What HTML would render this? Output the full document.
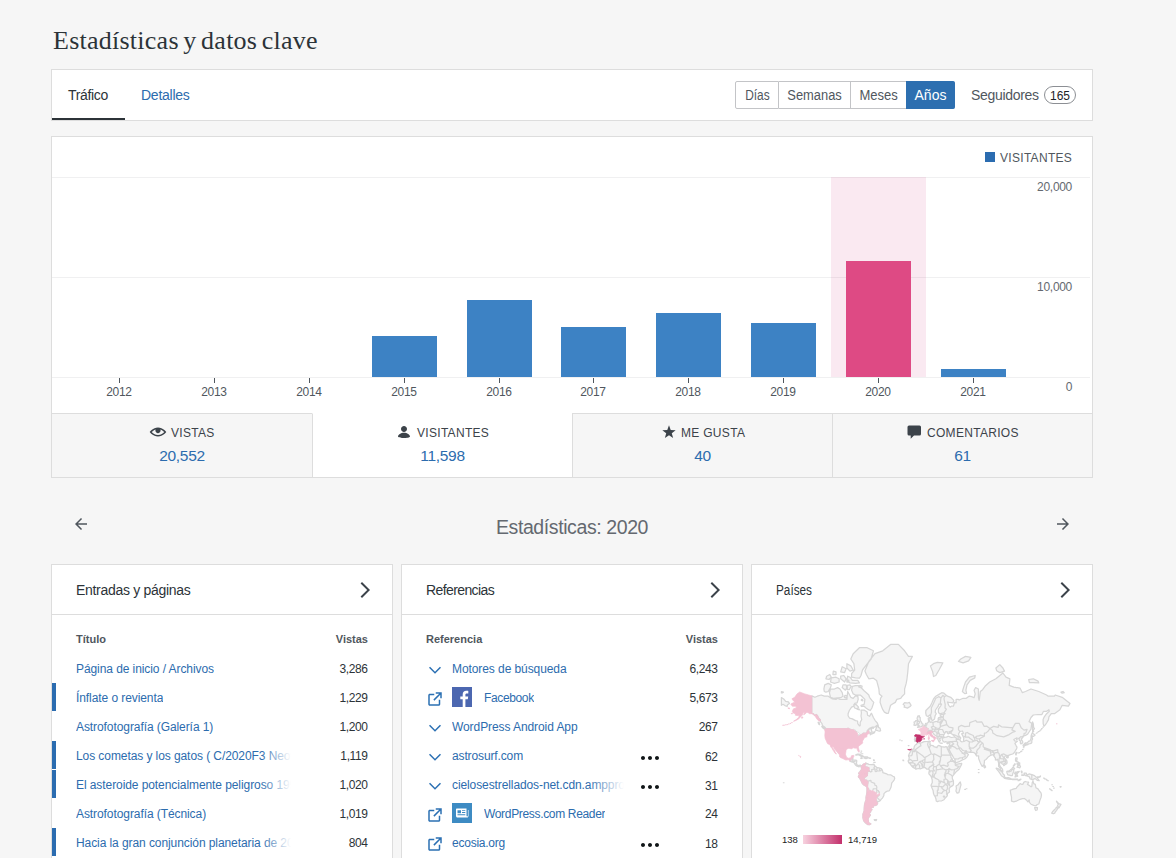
<!DOCTYPE html>
<html lang="es">
<head>
<meta charset="utf-8">
<title>Estadísticas y datos clave</title>
<style>
*{box-sizing:border-box;margin:0;padding:0}
html,body{width:1176px;height:858px;overflow:hidden;background:#f6f6f6}
body{font-family:"Liberation Sans",sans-serif;color:#2c3338;position:relative;font-size:14px}
.abs{position:absolute}
.card{position:absolute;background:#fff;border:1px solid #dddddd}
h1{position:absolute;left:53px;top:24px;letter-spacing:.25px;word-spacing:-2.200px;font-family:"Liberation Serif",serif;font-weight:400;font-size:26px;line-height:34px;color:#2c3338;white-space:nowrap}
/* nav */
.tab{position:absolute;top:0;height:50px;line-height:50px;font-size:14px;white-space:nowrap}
.tab.sel{color:#2c3338}
.tab.lnk{color:#2c6cae}
.seg{position:absolute;top:11px;height:28px;line-height:26px;border:1px solid #c3c4c7;border-left:none;background:#fff;color:#50575e;font-size:14px;text-align:center;white-space:nowrap}
.seg.first{border-left:1px solid #c3c4c7;border-radius:2px 0 0 2px}
.seg span{display:inline-block}
.seg.on{background:#2d6fb0;border-color:#2d6fb0;color:#fff;border-radius:0 2px 2px 0}
.badge{position:absolute;border:1px solid #8c8f94;border-radius:9px;font-size:12px;line-height:15px;text-align:center;color:#2c3338;background:#fff}
/* chart */
.grid{position:absolute;left:0;width:1038px;height:1px;background:#f0f0f1}
.bar{position:absolute;width:65px;background:#3d82c4}
.yl{position:absolute;font-size:12px;line-height:14px;color:#646970;text-align:right;width:60px;letter-spacing:-.3px}
.xl{position:absolute;font-size:12px;line-height:14px;color:#50575e;text-align:center;width:60px;top:248px;letter-spacing:-.3px}
.tick{position:absolute;width:1px;height:4.500px;top:241px;background:#50575e}
/* stat tabs */
.st{position:absolute;top:413px;height:65px;width:261px;border:1px solid #dddddd;background:#f6f6f6;text-align:center}
.st.on{background:#fff;border-top-color:#fff}
.st .lb{position:absolute;top:11px;font-size:12px;line-height:16px;letter-spacing:.3px;color:#3c434a;white-space:nowrap}
.st .ic{position:absolute}
.st .vl{position:absolute;left:0;right:0;top:32px;font-size:15.5px;line-height:20px;color:#2c6cae;letter-spacing:-.3px}
/* modules */
.mh{position:absolute;left:0;right:0;top:0;height:50px;border-bottom:1px solid #dddddd;line-height:51px;padding-left:24px;font-size:14px;color:#2c3338}
.mh svg{position:absolute;left:300px;top:13px}
.colh{position:absolute;top:66px;font-size:11px;line-height:16px;font-weight:700;color:#50575e}
.row{position:absolute;left:0;right:0;height:29px;line-height:31px;font-size:12px;color:#2c6cae;white-space:nowrap}
.row .t{position:absolute;left:24px;top:0;overflow:hidden;letter-spacing:-.08px}
.row .v{position:absolute;right:24.500px;top:0;color:#2c3338;font-size:12px;letter-spacing:-.4px}
.row.mark:before{content:"";position:absolute;left:0;top:0;bottom:1px;width:4px;background:#2b6cb0}
.ri{position:absolute}
.fade{position:absolute;top:0;height:29px;width:40px;background:linear-gradient(to right,rgba(255,255,255,0),#fff)}
</style>
</head>
<body>
<h1>Estadísticas y datos clave</h1>

<!-- nav card -->
<div class="card" style="left:51px;top:69px;width:1042px;height:52px">
  <div class="tab sel" style="left:16px;letter-spacing:-.33px">Tráfico</div>
  <div class="abs" style="left:0;top:48px;width:73px;height:2px;background:#2c3338"></div>
  <div class="tab lnk" style="left:89px;letter-spacing:-.25px">Detalles</div>
  <div class="seg first" style="left:683px;width:44px"><span style="transform:scaleX(.85)">Días</span></div>
  <div class="seg" style="left:727px;width:72px"><span style="transform:scaleX(.92)">Semanas</span></div>
  <div class="seg" style="left:799px;width:56px"><span style="transform:scaleX(.93)">Meses</span></div>
  <div class="seg on" style="left:854px;width:49px;padding-left:1px">Años</div>
  <div class="tab" style="left:919px;color:#50575e;letter-spacing:-.32px">Seguidores</div>
  <div class="badge" style="left:992px;top:16px;width:32px;height:18px;line-height:18px;color:#1d2327">165</div>
</div>

<!-- chart card -->
<div class="card" style="left:51px;top:136px;width:1042px;height:278px">
  <div class="abs" style="left:933px;top:15px;width:10px;height:10px;background:#2b6cb0"></div>
  <div class="abs" style="left:948px;top:13px;font-size:12px;line-height:16px;letter-spacing:.3px;color:#50575e">VISITANTES</div>
  <div class="grid" style="top:40px"></div>
  <div class="grid" style="top:140px"></div>
  <div class="grid" style="top:240px"></div>
  <div class="abs" style="left:779px;top:40px;width:95px;height:200px;background:rgba(214,54,130,0.11)"></div>
  <div class="bar" style="left:320px;top:199px;height:41px"></div>
  <div class="bar" style="left:415px;top:163px;height:77px"></div>
  <div class="bar" style="left:509px;top:190px;height:50px"></div>
  <div class="bar" style="left:604px;top:176px;height:64px"></div>
  <div class="bar" style="left:699px;top:186px;height:54px"></div>
  <div class="bar" style="left:794px;top:124px;height:116px;background:#de4a84"></div>
  <div class="bar" style="left:889px;top:232px;height:8px"></div>
  <div class="yl" style="left:960px;top:43px">20,000</div>
  <div class="yl" style="left:960px;top:143px">10,000</div>
  <div class="yl" style="left:960px;top:243px">0</div>
  <div class="tick" style="left:67px"></div><div class="xl" style="left:37px">2012</div>
  <div class="tick" style="left:162px"></div><div class="xl" style="left:132px">2013</div>
  <div class="tick" style="left:257px"></div><div class="xl" style="left:227px">2014</div>
  <div class="tick" style="left:352px"></div><div class="xl" style="left:322px">2015</div>
  <div class="tick" style="left:447px"></div><div class="xl" style="left:417px">2016</div>
  <div class="tick" style="left:541px"></div><div class="xl" style="left:511px">2017</div>
  <div class="tick" style="left:636px"></div><div class="xl" style="left:606px">2018</div>
  <div class="tick" style="left:731px"></div><div class="xl" style="left:701px">2019</div>
  <div class="tick" style="left:826px"></div><div class="xl" style="left:796px">2020</div>
  <div class="tick" style="left:921px"></div><div class="xl" style="left:891px">2021</div>
</div>

<!-- stat tabs -->
<div class="st" style="left:51px;width:262px">
  <svg class="ic" style="left:97px;top:9px" width="18" height="18" viewBox="0 0 24 24"><path fill="#3c434a" d="M12 6C5.188 6 1 12 1 12s4.188 6 11 6 11-6 11-6-4.188-6-11-6zm0 10c-3.943 0-6.926-2.484-8.379-4 1.04-1.085 2.862-2.657 5.254-3.469C8.61 9.317 8.5 9.64 8.5 10c0 1.933 1.567 3.5 3.5 3.5s3.5-1.567 3.5-3.5c0-.36-.11-.683-.375-1.469 2.392.812 4.214 2.385 5.254 3.469-1.455 1.518-4.437 4-8.379 4z"/></svg>
  <div class="lb" id="lb1" style="left:119px">VISTAS</div><div class="vl">20,552</div></div>
<div class="st on" style="left:312px">
  <svg class="ic" style="left:82px;top:9px" width="18" height="18" viewBox="0 0 24 24"><path fill="#3c434a" d="M12 4c2.21 0 4 1.79 4 4s-1.79 4-4 4-4-1.79-4-4 1.79-4 4-4zm0 16s8 0 8-2c0-2.4-3.9-5-8-5s-8 2.6-8 5c0 2 8 2 8 2z"/></svg>
  <div class="lb" id="lb2" style="left:104px">VISITANTES</div><div class="vl">11,598</div></div>
<div class="st" style="left:572px">
  <svg class="ic" style="left:88px;top:10px" width="16" height="16" viewBox="0 0 24 24"><path fill="#3c434a" d="M12 2l2.582 6.953L22 9.257l-5.822 4.602L18.18 21 12 16.891 5.82 21l2.002-7.141L2 9.257l7.418-.304z"/></svg>
  <div class="lb" id="lb3" style="left:108px">ME GUSTA</div><div class="vl">40</div></div>
<div class="st" style="left:832px">
  <svg class="ic" style="left:74px;top:11px" width="15" height="15" viewBox="0 0 15 15"><path fill="#3c434a" d="M2 .5h10.5a1.5 1.5 0 0 1 1.500 1.500v7a1.5 1.5 0 0 1-1.500 1.500H7L3.700 13.700V10.500H2A1.500 1.500 0 0 1 .5 9V2A1.500 1.500 0 0 1 2 .5z"/></svg>
  <div class="lb" id="lb4" style="left:94px">COMENTARIOS</div><div class="vl">61</div></div>

<!-- period nav -->
<svg class="abs" style="left:72px;top:515px" width="18" height="18" viewBox="0 0 24 24"><path fill="#50575e" d="M20 11H7.830l5.590-5.590L12 4l-8 8 8 8 1.410-1.410L7.830 13H20v-2z"/></svg>
<svg class="abs" style="left:1054px;top:515px" width="18" height="18" viewBox="0 0 24 24"><path fill="#50575e" d="M12 4l-1.410 1.410L16.170 11H4v2h12.170l-5.580 5.590L12 20l8-8-8-8z"/></svg>
<div class="abs" id="period" style="left:0;width:1144px;top:513px;text-align:center;font-size:19.5px;line-height:28px;color:#646970;letter-spacing:-.4px">Estadísticas: 2020</div>

<!-- module 1 -->
<div class="card" id="m1" style="left:51px;top:564px;width:342px;height:320px">
  <div class="mh"><span id="mh1" style="letter-spacing:-.3px">Entradas y páginas</span><svg width="24" height="24" viewBox="0 0 24 24"><path fill="#3c434a" d="M10 20l8-8-8-8-1.414 1.414L15.172 12l-6.586 6.586z"/></svg></div>
  <div class="colh" style="left:24px">Título</div><div class="colh" style="right:24px">Vistas</div>
  <div class="row" style="top:89px"><span class="t">Página de inicio / Archivos</span><span class="v">3,286</span></div>
  <div class="row mark" style="top:118px"><span class="t">Ínflate o revienta</span><span class="v">1,229</span></div>
  <div class="row" style="top:147px"><span class="t">Astrofotografía (Galería 1)</span><span class="v">1,200</span></div>
  <div class="row mark" style="top:176px"><span class="t" style="width:215px">Los cometas y los gatos ( C/2020F3 Neowise)</span><span class="fade" style="left:209px;width:30px"></span><span class="v">1,119</span></div>
  <div class="row mark" style="top:205px"><span class="t" style="width:215px">El asteroide potencialmente peligroso 1998 OR2</span><span class="fade" style="left:209px;width:30px"></span><span class="v">1,020</span></div>
  <div class="row" style="top:234px"><span class="t">Astrofotografía (Técnica)</span><span class="v">1,019</span></div>
  <div class="row mark" style="top:263px"><span class="t" style="width:215px">Hacia la gran conjunción planetaria de 2020</span><span class="fade" style="left:209px;width:30px"></span><span class="v">804</span></div>
</div>

<!-- module 2 -->
<div class="card" id="m2" style="left:401px;top:564px;width:342px;height:320px">
  <div class="mh"><span id="mh2" style="letter-spacing:-.6px">Referencias</span><svg width="24" height="24" viewBox="0 0 24 24"><path fill="#3c434a" d="M10 20l8-8-8-8-1.414 1.414L15.172 12l-6.586 6.586z"/></svg></div>
  <div class="colh" style="left:24px">Referencia</div><div class="colh" style="right:24px">Vistas</div>
  <div class="row" style="top:89px"><svg class="ri" style="left:24px;top:6.500px" width="18" height="18" viewBox="0 0 24 24"><path fill="#2b70b3" d="M20 9l-8 8-8-8 1.414-1.414L12 14.172l6.586-6.586z"/></svg><span class="t" id="r1" style="left:50px;top:0px;">Motores de búsqueda</span><span class="v" style="top:0px">6,243</span></div>
  <div class="row" style="top:118px"><svg class="ri" style="left:24px;top:6.500px" width="18" height="18" viewBox="0 0 24 24"><path fill="#2b70b3" d="M19 13v6c0 1.105-.895 2-2 2H5c-1.105 0-2-.895-2-2V7c0-1.105.895-2 2-2h6v2H5v12h12v-6h2zM13 3v2h4.586l-7.793 7.793 1.414 1.414L19 6.414V11h2V3h-8z"/></svg><span class="abs" style="left:50px;top:4px;width:20px;height:20px;background:#4c67b0;overflow:hidden"><svg class="abs" style="left:0;top:0" width="20" height="20" viewBox="0 0 20 20"><path fill="#fff" d="M10.700 20v-7.700H8.300V9.500h2.400V7.400c0-2.300 1.400-3.600 3.500-3.600.9 0 1.800.1 2.100.15v2.500h-1.500c-1.100 0-1.400.6-1.400 1.300v1.750h2.800l-.4 2.800h-2.400V20z"/></svg></span><span class="t" id="r2" style="left:82px;top:0px;letter-spacing:-.36px">Facebook</span><span class="v" style="top:0px">5,673</span></div>
  <div class="row" style="top:147px"><svg class="ri" style="left:24px;top:6.500px" width="18" height="18" viewBox="0 0 24 24"><path fill="#2b70b3" d="M20 9l-8 8-8-8 1.414-1.414L12 14.172l6.586-6.586z"/></svg><span class="t" id="r3" style="left:50px;top:0px;">WordPress Android App</span><span class="v" style="top:0px">267</span></div>
  <div class="row" style="top:176px"><svg class="ri" style="left:24px;top:6.500px" width="18" height="18" viewBox="0 0 24 24"><path fill="#2b70b3" d="M20 9l-8 8-8-8 1.414-1.414L12 14.172l6.586-6.586z"/></svg><span class="t" id="r4" style="left:50px;top:0;letter-spacing:-.13px">astrosurf.com</span><svg class="ri" style="left:236px;top:5px" width="24" height="24" viewBox="0 0 24 24"><path fill="#101517" d="M7 12c0 1.104-.896 2-2 2s-2-.896-2-2 .896-2 2-2 2 .896 2 2zm12-2c-1.104 0-2 .896-2 2s.896 2 2 2 2-.896 2-2-.896-2-2-2zm-7 0c-1.104 0-2 .896-2 2s.896 2 2 2 2-.896 2-2-.896-2-2-2z"/></svg><span class="v" style="top:1px">62</span></div>
  <div class="row" style="top:205px"><svg class="ri" style="left:24px;top:6.500px" width="18" height="18" viewBox="0 0 24 24"><path fill="#2b70b3" d="M20 9l-8 8-8-8 1.414-1.414L12 14.172l6.586-6.586z"/></svg><span class="t" id="r5" style="left:50px;top:0;width:172px;letter-spacing:-.1px">cielosestrellados-net.cdn.ampproject.org</span><span class="fade" style="left:186px;width:36px"></span><svg class="ri" style="left:236px;top:5px" width="24" height="24" viewBox="0 0 24 24"><path fill="#101517" d="M7 12c0 1.104-.896 2-2 2s-2-.896-2-2 .896-2 2-2 2 .896 2 2zm12-2c-1.104 0-2 .896-2 2s.896 2 2 2 2-.896 2-2-.896-2-2-2zm-7 0c-1.104 0-2 .896-2 2s.896 2 2 2 2-.896 2-2-.896-2-2-2z"/></svg><span class="v" style="top:1px">31</span></div>
  <div class="row" style="top:234px"><svg class="ri" style="left:24px;top:6.500px" width="18" height="18" viewBox="0 0 24 24"><path fill="#2b70b3" d="M19 13v6c0 1.105-.895 2-2 2H5c-1.105 0-2-.895-2-2V7c0-1.105.895-2 2-2h6v2H5v12h12v-6h2zM13 3v2h4.586l-7.793 7.793 1.414 1.414L19 6.414V11h2V3h-8z"/></svg><span class="abs" style="left:50px;top:4px;width:20px;height:20px;background:#3d8bc3"><svg class="abs" style="left:3.500px;top:4.700px" width="13" height="10" viewBox="0 0 13 10"><path fill="#fff" d="M1 .5h9.500v7.300c0 .5.300.8.700.8s.700-.300.700-.800V2h.600v6c0 .800-.600 1.500-1.400 1.500H1.500C.700 9.500 0 8.800 0 8V1.500C0 .900.400.5 1 .5z"/><path fill="#3d8bc3" d="M1.500 2.200h3.500v3H1.500zM6 2.200h3.300v.9H6zM6 4h3.300v.9H6zM1.500 6.300h7.800v.9H1.500z"/></svg></span><span class="t" id="r6" style="left:82px;top:0px;letter-spacing:-.33px">WordPress.com Reader</span><span class="v" style="top:0px">24</span></div>
  <div class="row" style="top:263px"><svg class="ri" style="left:24px;top:6.500px" width="18" height="18" viewBox="0 0 24 24"><path fill="#2b70b3" d="M19 13v6c0 1.105-.895 2-2 2H5c-1.105 0-2-.895-2-2V7c0-1.105.895-2 2-2h6v2H5v12h12v-6h2zM13 3v2h4.586l-7.793 7.793 1.414 1.414L19 6.414V11h2V3h-8z"/></svg><span class="t" id="r7" style="left:50px;top:0;letter-spacing:-.24px">ecosia.org</span><svg class="ri" style="left:236px;top:5px" width="24" height="24" viewBox="0 0 24 24"><path fill="#101517" d="M7 12c0 1.104-.896 2-2 2s-2-.896-2-2 .896-2 2-2 2 .896 2 2zm12-2c-1.104 0-2 .896-2 2s.896 2 2 2 2-.896 2-2-.896-2-2-2zm-7 0c-1.104 0-2 .896-2 2s.896 2 2 2 2-.896 2-2-.896-2-2-2z"/></svg><span class="v" style="top:1px">18</span></div>
</div>

<!-- module 3 -->
<div class="card" id="m3" style="left:751px;top:564px;width:342px;height:320px">
  <div class="mh"><span id="mh3" style="display:inline-block;transform-origin:0 50%;transform:scaleX(.84)">Países</span><svg width="24" height="24" viewBox="0 0 24 24"><path fill="#3c434a" d="M10 20l8-8-8-8-1.414 1.414L15.172 12l-6.586 6.586z"/></svg></div>
</div>
<!--MAP--><svg class="abs" style="left:770px;top:636px" width="306" height="200" viewBox="770 636 306 200"><path fill="#f5f5f5" stroke="#d6d6d6" stroke-width="1.250" stroke-linejoin="round" d="M861.4 765.8L862.5 765.2L863.3 764L864.9 763.7L866 762.8L866 764L867.2 763.6L868.8 764.4L871.1 764.6L873.4 764.3L874.2 765.2L875 765.9L876.6 767.3L878.9 767.9L881.2 768.7L882 769.5L882.8 771.4L882.8 772.6L884.4 773.1L886.7 773.8L887.5 774.6L890.6 774.8L892.9 776.3L894.3 776.9L894.7 778.5L894.1 780L892.9 781.6L891.8 782.8L891.4 785.2L891 787.3L889.8 789.8L889 791L887.1 791.2L885.5 792.1L884 793.6L883.8 795.8L882.4 798.1L881.1 799.4L880.1 800.8L878.9 801.6L877.3 801.3L876.2 800.8L877.2 802.3L877.6 803.5L876.8 804.9L875 805.6L873.3 805.7L873.2 807.5L871.1 807.7L871.1 809.3L872.1 809.5L870.9 810.9L870.6 812.2L869.1 813.1L870.3 814.8L870.3 815.4L869 817.2L868 818.8L868.4 820.6L868.4 821.5L868.8 822.9L870.9 823.9L869.5 824.6L867.6 824.6L865.6 823.1L863.7 820.9L862.9 817.8L862.9 814.2L864.1 810.9L864.2 808.2L864.5 804.7L865.1 802.3L866 799.9L866 797.2L866.8 793.2L867 789.4L866.9 787.1L866 786.3L863.3 784.7L862.3 783.5L861.6 782L860.6 780L859.6 778.1L858.5 777.3L858.4 776.1L859.2 775.3L859.4 774.6L858.6 773.4L859.4 772.2L860.2 771.4L860.6 770.6L861.5 769.5L861.4 767.5L861 767ZM923.8 726.1L924.5 725.7L925.3 724.3L925.7 723.3L927.3 723L928.4 722.3L928.5 720.3L928.2 718.2L930 717.2L930 719.6L929.4 721L930.2 722.3L931.5 721.8L932.9 722.3L936.1 721.3L937.2 721.8L938.2 720.6L938.2 718.2L939.4 717.2L940.8 717.9L940.8 716.3L940.1 715L942.1 714.4L943.6 714.5L945.2 713.7L944 712.8L941.3 713.4L939.4 713.7L938.4 712.1L938.4 709.2L940.9 705.6L941.5 704.3L939 704L938.2 706.2L935.5 710L935.2 712.1L936.2 713.7L935.1 715.7L934.7 718.2L934.3 719.3L933 720.3L931.9 720.3L931.5 718.9L930.6 716L930.1 714.8L928 716.5L926.3 715.7L925.7 712.9L925.9 710.5L928.4 708L930.2 706.2L931.9 702.8L933.5 699L935.8 696.2L938.6 694.6L941.7 692.7L944 693.2L946 695L947.5 696.2L950.7 697.3L953.8 700.4L953 702.8L949.1 702.4L947.5 702L948.7 705.3L950.3 707.1L951.4 706.2L953.4 706.2L954.6 702.4L956.1 702.8L956.1 699.4L958.1 699.4L959.2 700L963.1 698.3L966.3 698.3L969 696.2L971.7 696.6L974.1 697.7L975.2 693.9L974.1 690.2L975.6 687.6L978.4 689L978.4 697.3L979.1 700.4L979.5 698.3L980.3 691.5L982.6 689.7L985 686.3L989.7 682L995.9 678.8L1002.9 673L1006 677.2L1009.9 678.8L1009.2 685.4L1013.8 687.1L1020.1 688.2L1022.4 692.7L1025.5 691.5L1031 689L1038.8 691.5L1046.6 695L1048.2 696.2L1054.4 696.2L1055.2 695L1062.2 697.3L1070 703.4L1068.4 706.2L1062.2 705.3L1059.9 709.7L1054.4 713.7L1051.3 713.7L1048.9 716.8L1048.5 719.6L1046.6 723L1045.3 724.9L1044 726.2L1043.2 723.7L1043.1 719.6L1044.3 716.8L1046.6 713.7L1049.3 711.3L1048.9 709.7L1046.6 711.3L1043.5 711.3L1041.9 714.5L1038 714.5L1033.3 715L1031 717.5L1029 721.7L1030.6 722.3L1031.8 723.7L1031.4 726.2L1031 729.2L1029.4 731.5L1027.5 734.3L1025.5 735.4L1024 735.9L1023.2 735.9L1022.8 737.5L1021.2 739L1022.7 741.5L1022.7 742.9L1020.9 743.9L1020.3 742.9L1020.5 741L1019.3 740.5L1019.3 738.8L1018.8 738.5L1016.6 739.5L1017 737.8L1013.8 739.5L1014.6 741L1017.4 741.2L1015.8 742.5L1014.9 743.4L1016.2 745.8L1017 747.1L1016.6 748.9L1015.4 750.7L1014.2 752.7L1012.7 754L1010.3 754.7L1008 755.6L1006.4 755.3L1005 756.3L1004.3 757.5L1005.3 759.1L1006.7 760.4L1007.1 762.4L1006.8 763.6L1005.3 764.4L1003.7 765.7L1003.7 764.8L1002.1 764L1001.4 762.8L1000.4 762L999.8 763.2L999.4 764.4L1000 765.9L1000.8 767.3L1002.5 769.1L1002.9 771.5L1002.1 771L1000.6 769.9L1000 767.9L998.6 766.3L998.6 764.8L998.7 763.2L998 760.8L997.5 759.3L996.3 760.1L995.4 760L995.5 758.3L993.8 755.8L993.2 754.6L992 755L990.4 755.3L989.7 756L988.1 757.1L986 759.5L984.4 760.5L984.4 762.4L984 764.5L982.6 766.2L982.2 766.3L981.3 764.9L980.3 762.8L979.5 760.8L978.7 758.7L978.6 757.5L978.6 755.8L978 755.8L976.8 756L975.6 754.7L976.4 754.2L975.1 753.6L974.1 752.6L971.7 752.2L969.8 752.3L967 751.9L966.3 750.7L964.3 751L962.4 750.1L961.2 748.5L960 747.8L959.2 748L959.6 749.4L960.8 751L962 752L962 752.9L963.9 753.1L965.6 751.6L965.9 752.9L967.6 753.6L968.4 754.6L967.4 756.3L966.6 757.5L964.7 759L962.4 760L960 761.3L956.9 762.5L955.6 762.6L955.1 760.8L955 759.5L953.5 757.5L952.3 755.4L950.8 752.9L949.5 750.3L949 748.5L948.6 750L947.5 749.4L947.1 748L947 747L948.6 746.9L949.1 745.5L949.7 743.9L949.9 742.5L950 741.7L948.7 741.8L947.5 742.4L945.7 741.7L944.4 742.2L943.2 741.5L942.5 740L942.2 739L942.2 738.5L943.2 738L944.4 737.5L946.4 737.2L947.9 736.4L949.1 736.4L950.3 737.2L951.8 737.5L954.2 737L954.2 735.7L952.6 734.6L951 733.4L951 732.6L952.2 730.7L951 731.2L949.1 731.9L949.5 732.9L950.3 732.9L949.1 733.4L948.1 733.9L947.1 732.8L947.9 732.1L946.6 731.5L945.7 731.6L945 732.9L944.1 734.5L943.6 735.4L943.4 736.1L943.8 736.8L944.4 737.4L943.2 737.6L942.2 738L942.1 737.7L940.9 737.7L940.3 738.3L939.6 738.1L939.6 739.2L940.5 740.3L939.9 740.7L939.7 742L939.1 741.9L938.6 741L938.3 740.1L937.8 739.2L937 738L937 736.6L936.2 735.9L935.1 735.2L933.7 734.1L933.1 733L932.5 732.4L932.4 731.5L931.2 731L930 731.2L928.4 731.6L927.3 732.3L926.5 731.8L927.7 730.3L928.2 728.6L926.3 728L925.1 727.4ZM917.2 742.7L920.2 743.2L921.8 742.6L924.1 741.6L927.3 741.5L929.4 741.2L930.4 741.5L929.8 742.5L930.2 743.9L929.8 744.6L930.8 745.1L933.5 745.9L933.9 746.7L935.5 747.2L937 747.7L937.4 746.2L938.6 745.4L939.9 745.9L941.5 746.6L944.4 747.2L946 746.7L947 747L947.1 748L947.9 750L949.5 753.3L950.8 755.8L950.9 757.5L951.9 758.3L952.6 760.4L953.9 761.1L955.5 762.8L955.6 763.6L956.5 764.4L958.5 763.8L961.7 763.3L961.6 764.4L960 767.5L958.9 769.5L956.1 771.8L954.2 774L952.6 776.1L952.2 777.7L952.6 779.3L953.4 780.8L953.5 784L953 785.4L950.5 786.9L949.1 788.5L949.5 791.9L947.5 793.4L947.3 795.8L946 797.2L944 799.7L941.8 800.8L939 801L937.4 801.6L936.2 801L936 799L935.2 796.7L934.3 795.4L933.5 793.6L933.1 790.6L931.5 786.9L931 785.2L932.3 782.4L932.2 779.7L931.4 777.3L930.8 775.9L929.2 774.2L928.8 773.1L929.2 771.8L929.4 770.1L928.7 769.1L926.9 769.2L925.3 767.7L923.8 767.7L922.6 768L920.2 768.9L918.3 768.5L916 769.2L914.4 768.1L912.8 767.2L911.5 765.9L910.5 764.4L908.8 762.8L908.1 761L908.9 760L909.2 757.5L908.5 755.8L909.3 753.6L910.5 751.6L911.7 750.1L914 748.5L914.2 746.7L915.2 745L916.5 744.4ZM811.8 695.9L814.9 697.3L817.3 696.2L821.2 695L824.3 696.2L828.2 696.2L832.1 698.8L836 699.4L837.6 698.3L839.9 699.4L843.8 699.4L846.9 699.4L847.7 691.5L849.6 695L850.8 697.3L853.2 698.3L855.1 696.2L857.8 696.2L858.2 699.4L857.1 702.8L854.7 703.4L853.9 706.2L851.6 707.1L849.3 710.5L848.1 713.7L848.1 715.7L849.6 718.2L852.4 718.9L855.5 720.6L857.6 721L857.8 723.7L859.4 725.9L860.2 725.6L860.2 722.3L861.7 719.6L861 716L861.4 712.9L861 710L864.1 710L867.2 712.1L867.6 715.3L869.5 716.3L871.1 713.7L871.5 713.3L873.4 717.5L875 720.3L877.3 723L878.1 724.9L876.2 725.8L875 727.2L871.9 727.2L869.5 728.3L867.2 730.7L869.5 728.9L871.5 728.6L871.5 730.4L871.9 731.9L874.2 732.3L875 731.5L874.2 732.9L871.9 733.8L870.3 734.8L870.3 733.8L871.1 732.6L869.5 733.2L868.9 732.4L868.9 731L868 730.5L867.2 731.5L866 733.2L863.3 733.2L862.1 734.3L860.2 735.1L860.2 735.6L857.1 736.4L857.5 735.4L857.4 732.9L855.9 731.5L853.2 729.6L852 729.8L850 729.2L847.9 728.1L847.7 728.6L826 728.6L825.5 728L824.3 726.8L822.4 725.6L822 723.7L820.4 721.7L820.4 721L820.4 719.6L818.8 718.2L817.7 716L816.5 714.5L814.5 715.3L813.4 713.7L811.8 713.3ZM849.9 761.1L851.6 761.8L853.2 762.2L853.5 762.4L854.7 763.6L855 764.4L855.5 765L856.7 765.9L857.8 766.3L859 766.9L859.4 766.1L860.2 765.5L861 767L861.4 765.8L860.2 765.1L858.6 765.7L857.4 765.2L856.6 764.1L856.5 762.8L856.8 760.8L855.9 760.1L853.9 760.1L852.8 760.1L852.9 758.7L852.9 757.9L852.2 758.5L850.8 759L851.2 759.8L850.4 760ZM855.5 755L857.4 754.1L859.4 754.2L861.7 755.4L863.8 756.5L861.4 756.8L861 756.1L859 755L857.8 754.7L856.3 755.2ZM863.8 757.9L865.2 756.8L867.2 756.8L868.4 757.8L867.2 758.2L866 758.6ZM860.7 758L862.3 758.2L861.7 758.5L860.8 758.3ZM869.4 757.9L870.6 758L870.5 758.3L869.4 758.3ZM873.8 702.4L871.9 708L870.3 710.5L868.4 709.7L866 708L864.1 706.2L861.4 706.5L861 705.3L864.1 704.3L864.5 702.4L864.9 699.4L861.7 696.2L860.2 695L857.8 695L855.5 695L853.2 693.9L851.6 690.2L852.4 686.3L855.5 685.7L858.6 685.7L861.7 688.2L864.1 690.7L866.4 692.7L868.8 695L869.5 697.3L871.9 700.4ZM830.5 697.3L833.7 698.3L837.6 697.9L840.7 697.7L843 696.2L842.2 692.7L839.9 689L837.6 687.6L834.4 689L830.5 689L829.4 692.7ZM824.3 691.5L825.9 692.2L828.2 691.5L830.5 687.6L831.3 684.9L828.2 683.4L824.7 684.9L823.9 689ZM851.6 677.2L855.5 677.9L859.4 678.2L861 675.5L862.5 670L865.6 665.9L871.1 659L873.4 650.8L867.2 647.7L859.4 647.7L853.2 653.7L850.8 659L853.9 663.7L854.7 670L851.6 673.7ZM850 677.2L852.4 680.4L857.8 680.4L859.4 682.9L855.5 683.4L850 682.9L846.9 680.4L847.7 676.2ZM830.5 682L834.4 683.4L839.1 682L839.1 678.8L836 677.2L831.3 677.9ZM842.2 687.6L845.4 690.2L846.9 687.6L846.1 684.9L843 684.9ZM847.3 689.7L849.3 689.7L851.2 686.3L850 684.9L847.3 685.4ZM846.9 663.7L850.8 665.9L853.2 670L850 671.1L846.9 668ZM853.9 704.3L856.3 704.7L858.6 707.1L857.1 708.8L854.7 708L853.9 706.2ZM840.7 678.8L844.6 682L846.1 678.8L843.8 675.5L840.7 676.2ZM875.5 730.1L876.9 726.8L878.3 725.6L878.5 727.4L880.1 728.3L880.6 730.7L879.7 731.2L878.3 731L876.9 730.3ZM821.7 726.6L824.3 727.2L825.5 729.2L824.3 729L822.4 727.4ZM864.9 671.1L868.8 661.4L875 653.7L882.8 650.8L890.6 644.4L898.4 644.4L904.6 650.8L908.5 656.4L912.4 656.4L908.5 663.7L907.8 671.9L907 678.8L906.2 683.4L904.6 689L904.6 693.9L902.3 696.2L900.7 698.3L896.8 699.4L895.3 702.4L892.5 704L890.6 705.3L889.8 708L888.3 713.4L886.7 713.4L884.4 712.1L882.8 709.7L881.6 706.7L880.1 702.4L880.5 698.3L882 696.2L879.3 693.9L878.9 689L876.6 680.4L873.4 678.2L868.8 678.8L866.4 674.5ZM903.1 704.3L904.6 702.6L907.8 703L909.3 702.4L910.5 704.3L911.1 705.3L910.1 706.5L907.4 708.1L905.4 707.4L904.1 707.1L904.6 705.6ZM874.2 819.6L876.6 819.5L876.2 820.6L874.6 820.5ZM916 741.3L914.9 741.5L914.9 740L914.4 739.8L914.9 738.3L915 736.6L914.9 736.5L915.4 736.4L916.7 736.5L916.8 737L916.4 738L916.3 739L916.2 740ZM917.5 727.3L919.1 727.1L921 726.6L922.8 725.9L923.1 724L922 723.7L921.6 722.3L920.6 721L920.2 719.6L920.2 717.3L919.1 717.2L919.5 715.9L917.9 715.9L917.3 717.5L917.1 718.9L917.9 720.3L918.1 721.3L919.3 721.3L919.5 723L918.3 723.3L918.4 724.3L917.7 725.2L919.2 725.7L918.4 726.2ZM914 725.2L915.2 725.4L916.9 724.7L917.1 723L917.4 721.7L916.9 720.7L915.6 720.7L915.2 721.7L914 722.1L914.4 723.4L914 724.7ZM930.4 665.9L933.5 663.7L937.4 662.3L942.9 662.8L939 670L935.8 675.5L933.5 676.5L932.7 671.9ZM962.4 691.5L963.5 687.6L965.5 682L969.4 677.2L975.2 675.5L974.8 677.9L970.2 680.4L967 684.9L965.9 690.2L966.6 693.4L964.7 693.6ZM995.9 668L999.8 664.6L1002.9 668L1004.5 671.1L999.8 672.6L996.7 670.8ZM1028.7 679.5L1033.3 678.8L1038 681.1L1038.8 682.9L1033.3 682.6L1029.4 682.6ZM1061 692.2L1063 691.5L1064.2 692.7L1062.2 693.2ZM958.5 661.4L963.1 662.8L968.6 660.9L970.9 657.4L965.5 656.4L960.8 659ZM960.3 782L961 784.8L960.4 786.9L958.9 792.6L957.1 793.2L955.9 791L956.4 788.5L956.1 786.1L958.1 784.8L959.2 783.2ZM1023.9 744.4L1025.2 742.9L1027.5 742.7L1028.7 741.2L1029.8 741.2L1031 738.7L1031 737.7L1032.1 737.1L1032.6 739L1031.8 740.5L1031.8 742.5L1031.4 743.2L1030.8 743.4L1030 743.7L1028.7 743.8L1027.7 744.8L1027.1 743.8L1025.5 744.1ZM1031 737L1031.2 735.2L1032.3 732.8L1033.7 734.1L1035.1 735.1L1033.6 736.4L1031.8 735.9ZM1023 745.1L1024 744.6L1024.6 745.5L1023.8 747L1023.4 746.2ZM1025.2 744.6L1026.7 744.2L1026.5 745L1025.5 745.5ZM1032.6 721.9L1033.3 723.7L1033.6 727.4L1034.5 728.6L1033.1 730.4L1033.7 731.5L1032.6 732.1L1032.6 729.2L1032.6 726.2L1032.3 723.7ZM1016.2 752.3L1017 752.4L1016 755L1015.6 754.2ZM1006.8 756.7L1008.4 756.7L1008 757.9L1006.6 757.7L1006.6 757.1ZM984.2 764.9L985.1 765.9L985.6 767.1L984.6 767.9L984 767.1L984 765.9ZM1015.8 757.9L1017.1 757.9L1017 759.5L1016.6 761.2L1018.5 762.4L1017.7 762L1015.9 761.4L1015.4 760ZM1017 767.1L1018.1 765.9L1019.7 765L1020.5 766.7L1019.7 767.9L1018.5 767.5ZM1017 763.3L1018.1 764L1019.7 762.8L1019.7 764.4L1018.5 764.8L1017.7 765.3L1017.2 764.4ZM1013.3 765.9L1015 763.7L1015.2 764.3L1013.7 766ZM1006.8 771.4L1008.4 771.3L1009.9 770.3L1011.9 768.7L1013.1 767.1L1014.6 768.5L1013.8 769.3L1013.7 771.4L1012.7 773.8L1012.3 775.6L1011.1 775.7L1009.2 775.2L1007.8 774.8L1007 773ZM996.1 768.2L997.9 768.5L1000 770.4L1002.5 772.6L1003.3 774.2L1004.5 775.3L1004.3 777.1L1003.3 777.1L1001.4 775.7L1000 773.4L998.6 771.4L997.1 769.7ZM1003.9 777.8L1005.1 777.3L1006.4 777.8L1008.2 777.6L1009.7 778.1L1011.1 778.7L1011 779.3L1008.4 779.1L1006 778.7L1004.8 778.4ZM1011.5 779L1012.8 779.1L1012.7 779.6L1011.6 779.5ZM1012.9 779.2L1014.8 779.1L1014.6 779.6L1013.1 779.7ZM1015.2 779.2L1017.7 779.1L1017.6 779.6L1015.4 779.6ZM1018.1 780.7L1019.3 779.7L1021 779.2L1020.5 779.8L1018.9 780.6ZM1015 776.9L1015.7 774.9L1014.6 773.4L1015.4 772L1017 771.8L1019.3 771.4L1018.5 772.3L1016.2 772.2L1015.8 773.4L1017.7 773.4L1016.8 774.2L1017.7 776.1L1017 776.3L1016.2 774.9L1015.8 776.9ZM1021.2 771L1022 771.4L1022 773L1021.4 772.2ZM1021.6 774.9L1023.6 774.9L1023.8 775.5L1021.9 775.3ZM1024 773.2L1026.3 773.2L1027.1 775.2L1029 773.9L1031.8 774.6L1034.5 775.6L1035.7 776.9L1036.8 777.3L1039.2 780.7L1037.2 780.4L1035.7 778.9L1034.1 778.6L1033 779.8L1030.2 778.9L1029.4 776.9L1027.1 776L1025.5 775.7L1024.8 774.8ZM1037.6 776.9L1039.6 776.5L1040.5 775.9L1040.4 776.7L1038.8 777.4ZM1010.3 790.2L1010.7 793.6L1011.5 797.2L1011.5 801.1L1013.8 801.8L1017 800.8L1020.1 799.3L1022.4 798.6L1024.4 798.5L1026.3 799.9L1027.9 801.8L1029.2 799.9L1029.4 802.3L1031 804.2L1033.7 805.4L1036 805.7L1037.2 804.5L1038.8 804L1039.8 800.6L1041.1 797.2L1041.5 794.9L1041 792.8L1039.4 791L1038 788.9L1035.9 787.7L1035.3 784.4L1033.7 783.6L1033 781L1032.2 782.8L1031.8 786.5L1030.6 786.5L1028.7 785.1L1027.5 784.4L1028.7 782.2L1027.1 782L1025.2 781.5L1023.8 782.4L1022.8 784.4L1021.6 784.3L1020.1 783.6L1018.5 785.5L1017.1 786.9L1016.2 788.3L1013.1 789.1L1011.1 790ZM1034.7 807.4L1037.5 807.6L1037.2 810L1035.7 810.5L1034.9 809ZM1056.5 801.2L1057.9 802.7L1058.7 803.7L1061 804.4L1059.9 806.2L1059.1 807.7L1058.1 808.1L1058.3 806.7L1057.4 806L1058.1 804.7L1057.9 803.7L1056.7 801.8ZM1056.5 807.2L1057.7 808.5L1056.6 810.4L1055.2 812L1054.8 813.1L1053.2 813.8L1051.7 813.1L1052.5 811.8L1054.4 809.8L1055.6 808.6ZM1049.7 788.7L1052.1 790.5L1051.7 790.5L1049.7 789.1ZM1060.1 786.5L1061.1 786.6L1060.9 787L1060.2 787ZM947 743.4L948.7 742.8L948.3 743.4L947.5 743.8ZM940.1 742.9L942.3 743.1L942.1 743.4L940.2 743.2ZM781.4 697.5L783.7 699L785.7 701.4L788.4 701.8L789.4 703.4L787.6 704.7L787.2 706.4L784.9 705.6L783 704.3L781.4 705.3ZM781.4 691.7L783.4 692.2L782.6 692.9L781.4 692.9ZM825.9 678.8L829 679.5L831.3 677.2L829.8 674.5L826.6 676.2ZM840.7 671.9L844.6 672.6L846.1 668.8L842.2 666.7ZM846.9 682L848.9 682L848.7 680.1L846.9 680.1ZM844.2 697.3L846.9 698.1L846.9 695.9L845 695.3ZM861.4 700.4L862.9 700.8L862.5 699.4L861.4 699.4ZM857.1 709.2L859.4 709.8L859 709ZM858.6 686.8L861.7 687.9L862.1 686L859.8 685.4ZM871.5 727.7L873.4 728.4L873 727.9ZM832.9 674.5L836 674.5L836 671.9L833.3 671.1ZM818.1 722.3L819.1 722.3L819.6 724.7L818.6 723.9Z"/>
<path fill="#fff" stroke="#d6d6d6" stroke-width="1.250" stroke-linejoin="round" d="M960 731.5L962.4 731L963.5 733.2L961.6 733.8L962.8 735.9L963.8 738L963.5 740L963.9 741.5L961.6 741.8L960.4 741L960 739L960.8 738L959.2 736.4L958.5 733.8Z"/>
<path fill="#fff" stroke="#d6d6d6" stroke-width=".6" d="M850 731.2L853.2 729.2L855.5 730L855.7 731.4L853.9 731.4L852 731.1ZM853.3 736.4L854.5 736.4L855.3 732.9L854.3 732.2L853.3 734.3ZM855.9 732.1L858.2 732.1L859.4 733.4L858.1 735.1L857.4 735.2L856.7 734.1ZM856.8 736.6L858.6 736.7L860.2 735.7L859.8 735.4L857.4 736.1ZM859.6 735.1L862.1 734.9L862.3 734.2L860.6 734.4Z"/>
<path fill="none" stroke="#d6d6d6" stroke-width="1.250" stroke-linejoin="round" d="M847.7 728.6L826 728.6M932.9 722.3L933.3 726.2L931.3 727.1L932.6 729.1L931.9 730.4L929.3 730.4L927.7 730.3M933.3 726.2L936.5 728L939.4 728.6L940.5 726.4L940.2 724.9L940.1 722.3L937.2 721.8M932.6 729.1L935.1 728.9L936.5 728M935.1 728.9L935.1 729.8L934.4 731.2L932.4 731.5M935.1 729.8L939.1 729.3L939.4 728.6M939.1 729.3L942.5 729.5L943.8 732.6L945 732.9M939.1 729.3L938.2 731.9L939.4 733.8L939.5 734.5L944.1 734.5M934.4 731.2L936.6 732.2L938.2 731.9M936.6 732.2L936.9 733.3L937 736.6M939.4 733.8L936.9 733.3M939.5 734.5L939.3 736.1L937.8 736.5L937 736.6M939.3 736.1L942.1 736.7L943.8 736.8M937.8 736.5L938.2 737.7L937.8 739.2M940.5 726.4L946.8 724.7L949.1 727.1L953 727.9L952.8 730L951.6 730.8M940.2 724.9L943.6 719.3L943.2 717.5L943.6 714.5M943.6 719.3L946 721L946.8 724.7M940.1 722.3L942.5 720L943.6 719.3M938.2 719.5L942.5 720M938.3 718.2L943.2 717.5M940.8 716.3L943.1 717.3M928.5 721.1L929.4 721.3M924.5 725.7L926.5 725.2L927.3 723.3M923.8 726.1L926.5 727.2L926.3 728M930.6 715.4L931.5 712.1L931.3 708L933.5 703.4L935.8 698.3L937.8 697.3L938.6 696.6L940.9 698.1L940.3 703.4L941.5 704.3M940.9 698.1L942.9 695.3L944.4 696.8L944 698.8L945.2 704.3L945 708L946.4 709.2L944 712.8M944.4 696.8L946 695.7M942.2 736.7L942.3 737.6M950 741.7L951.4 741.7L954.8 741.3L956.7 741.3L956.1 739.1L956.7 738.8L955.7 737.4L954.2 737M952.6 734.6L955.3 735.2L958.1 736.6L959.6 736.6L960.4 738.2M958.1 736.6L958.1 739L956.7 738.8M958.1 739L959.4 739.7L959.9 740.1M956.7 741.3L957.7 742.7L957.3 744.4L959 747.1L959.2 748M951.4 741.7L953.8 744L952.1 744.9L949.9 745.8L949.1 748.4M952.1 744.9L952.4 746.1L950.7 746.7L951 748L949.1 748.4M952.4 746.1L954.6 747.1L956.7 748.8L958.1 748.9L959 748M949.7 745L949.9 745.8M962 752.9L964.9 754.4L965.2 756.7L962.4 757.5L962.4 759.5M962.4 757.5L959.2 758.2L958.1 759L955.5 758.8L955.2 759.6M964.9 754.4L965.5 752.6M956.1 739.1L959.4 739.7M963.9 741.5L966.3 740.3L969.5 741.9L969.1 744.6L969.2 746.7L970 747.3L969.3 748.2L971.2 750.5L969.8 752.3M969.5 741.9L972.1 742L973.7 741.1L977.2 740.1L977.6 741.7L980.2 741.3L977.2 744.4L975.9 746.3L973.5 748.1L969.3 748.2M980.2 741.3L982.5 742.9L983.3 744.1L983.2 746.7L985 747.9L984.3 749.1L990.5 751.2L991.1 750.4L993.6 750.8L997.7 749.7L997.9 752.6L998.9 753.2M985 747.9L990.5 749.9L991.1 750.4M982.5 742.9L979.9 745.5L980 747.1L977.2 750L976.6 751.8L977.2 753L975.1 753.6M990.5 751.2L990.5 752.9L991.2 755.1M993.6 750.8L991.8 752.2L993.8 752.4L993.8 755.8M997.9 752.6L995.6 752.7L994.6 753.3L994 755.6M960 731.5L958.5 729.8L958.5 727.1L961.4 725.3L964.7 726.7L969.4 726.2L969.8 722.7L975.6 720.5L977.2 722.2L981.7 721.8L984.2 726.4L986.9 726.2L989.9 728.5M963.5 736.1L965.5 737.2L965.5 733.2L967.4 732.5L969.4 733.9L973.3 735.5L973.8 737.3L975.6 737.1L977.1 736.1L979.1 735.9L980.1 735.2L984.4 736.2L984.4 733.2L986.1 732.9L988.5 730.8L989.9 728.5M965.5 737.2L968.6 737L970.2 738.6L973.7 741.1M973.8 737.3L974.8 738.5L974.7 741.3M975.6 737.1L976.8 738.5L979.2 739L980.2 741.3M979.2 739L981.8 737.5L984.4 736.2M989.9 728.5L993.6 726.4L998.2 727.4L998.5 724.9L1001.6 726.8L1005 727.1L1010.1 727.7L1012.8 727.7L1011.9 729.9L1015.2 731.3L1012.3 732.4L1009.1 734.6L1003.7 736.8L997 735.7L992.8 733L992.4 730.4L989.9 728.5M1012.8 727.7L1015.4 723.4L1019.3 723.4L1021.2 727.7L1024 730.1L1027.1 729.3L1025.7 733.1L1024.1 733.3L1024 735.9M1023.7 736L1021.6 737L1020.8 736.6L1018.8 738.5M1020.6 740.7L1022 739.9M998.9 753.2L999.7 756.3L1000.7 755.7L1001.4 754.7L1003.9 753.9L1006 755.3M999.7 756.3L999.9 756.4L998.9 759.6L999.2 763.6M1000.7 755.7L1000.2 757.1L1000.7 758.7L1003.5 758.8L1004.2 761.6L1005.6 761L1005.7 759.7L1003.3 757L1001.4 754.7M1004.2 761.6L1001.8 761.4L1002.1 763.3M1005.6 761L1005.7 762.9L1004.3 763.5L1003.3 764.4M1000 767.5L1001.4 767.8M1007.2 771.1L1009 771.9L1011.3 771L1012 769.3L1013.5 769.3M1031.8 774.6L1031.8 779.7M915 750.1L911.5 750.1M915 750.1L915 751.6L912.4 751.6L912.4 753.8L911.7 755.6L908.5 755.8M915 750.1L920.2 746.1L920.9 745.9L920.4 743.7L920.1 743.3M915 750.1L918.1 752.4L922.7 755.8L924.4 757.5L925.1 757.4L925.1 759.2L922 760.8L919.5 761.8L917.5 764.4L919.6 765L919.7 768.6M918.1 752.4L916.7 752.4L917.5 759.5L917.5 760.4L912.3 760.9L912.9 762.8L915.2 764L915.3 766.7L916 769.2M912.3 760.9L910.5 759.5L908.9 760M912.9 762.8L911.1 762.7L908.8 762.9M911.1 762.7L910.1 764M915.2 764L913.5 766.1L911.4 765.5M913.5 766.1L912.8 767.2M917.5 764.4L915.3 766.7M925.1 757.4L927.6 756L931.2 753.7L929.2 747.9L928.8 747.8L927.6 744.6L928.3 741.6M929.2 747.9L930.8 745.1M931.2 753.7L932.9 754.5L934.3 753.8L940.5 757.1L940.5 760.2L939.4 761.6L939.4 764L936.4 766.3L933.9 766.7L933.1 768.7L934.4 770.9L932.2 770.9L930.6 770.9L929.4 770.8M941.3 746.6L941.3 755L950.7 755M941.3 755L941.3 756.7L940.5 756.7L940.5 757.1M934.3 753.8L933.5 755.8L933.9 759.3L932.3 761.9L932.9 762.8L933.9 764.8L932.6 764.8L933.9 766.7M925.1 759.2L924.6 763.4L924 767.6M924.6 763.4L925.1 762L927.3 762.4L932.3 761.9M932.9 762.8L932.8 762.4M919.5 761.8L922 764L922.6 764L923 767.8M921.6 764L922.2 766.3L922.7 767.9M922 760.8L923.5 762.8L924.6 763.4M928.5 768.9L929.6 767.1L931.5 765.9L932.6 764.8M940.5 760.2L939.4 764M939.4 764L940.4 765.8L943.2 768.7L945.8 769.9L948.2 769.3L949.9 769.2L951.4 769.8L954.5 769.5L953.8 773.9M940.4 765.8L940.9 765.7L943.6 765.2L947.5 766.4L948.3 765.2L947.5 763L950.3 761.3L951.8 758.3M950.3 761.3L953 761.2L954.9 762.8L955.5 762.8M954.5 769.5L956.9 768.7L959.2 766.3L958.5 766.3L955.3 765.3L955.2 764L955.6 763.6M948.2 769.3L949.1 768.3L949.9 769.2M936.4 766.3L936.3 769.9L935.7 773.4L934.4 774.3L934.3 775.9L933 776.4L931.9 776.2L931.3 777.1M936.3 769.9L939.4 769.4L943.2 768.7M945.8 769.9L946.2 770.9L945 773.1L944.9 773.7L944.4 774.8L944.7 776L945.8 779L944 779.3L944 781.9L945 783.2L944.2 782.8L941.5 781.4L940.5 781.2L939 781.4L938.8 780L936.6 778.8L935.1 778.2L934.7 777.2L931.9 777.2L931.4 777.3M945 773.1L948.2 773.4L948.3 771.8L949.1 771.2L948.3 769.3M948.2 773.4L951.2 775L952.4 776.3M944.9 773.7L945.6 773.5L945.8 774.5L945.5 776L944.7 776M945.8 779L947.5 780L948.7 781.7L951 781.8L953.3 780.8M947.5 780L947.7 783.6L949.7 785.9L949.3 784L948.7 781.7M947.7 783.6L945.4 784.4L947.5 785.8L947.4 788.9L946.2 790.5L946.8 792.3L946.7 794.3L947.5 794.3M940.5 781.2L940.5 782.8L939 782.8L939 786.5L940.1 786.6L941.5 786.7L942.9 786.9L944.6 785L945.4 784.4M939 786.5L936.2 786.4L932.7 786.4L931 786.2M941.5 786.7L942.1 788.5L944.7 790.4L946.2 790.5M938.2 787.1L938.2 790.2L937.4 790.2L937.4 792.6L937.4 795.7L935.4 796L934.7 795.9M937.4 792.6L939.7 793L941.7 793.4L942.9 791.6L944.7 790.4M942.9 796.8L944 796L944.7 796.8L943.6 797.7M929.4 770.8L930.6 770.9M930.6 771.8L929.4 771.8M933 776.4L932.6 774.5L933.1 773.4L932.7 771.5L932.2 770.9M865.6 763.8L864.9 765.4L865.4 766.7L867.2 767.1L869.1 767.8L868.9 769.5L869.5 771.2L867.4 771.3L867.6 773L867.2 775.9M869.5 771.2L870.7 772L871.9 771.4L871.7 769.5L874.2 769.1L874.5 768.5L873.9 767.9L875 765.9M874.5 768.5L875.2 769.1L875 771L875.9 771.7L877.3 771L879.7 770.9L880.9 770.7L881.6 769.3M877.3 771L876.6 769.5L877.2 767.9M879.7 770.9L879.4 768.2M867.2 775.9L864.9 777.3L864.1 778.5L865 780L866.8 780L866.7 781.2L868 781.2L868.1 782.7L867.6 784.8L867.6 786.5M868 781.2L870.9 780.4L871.1 782L874.6 783.4L875 785.4L876.3 785.5L876.6 786.5L876.9 786.9L876.6 788.5L873.2 788.9L872.9 790.4M876.6 788.5L876.7 790.2L878.3 790.5L878.6 791.9L879.4 791.9L879.2 793.3M876.8 792.9L876.7 790.2M869.5 791L868.4 788.1M879.8 794.6L876.9 797.3L880.1 800.6M876.4 799.4L876.2 800.8M852.2 758.5L852.2 760L852.9 760.2M852.2 760L852.1 761.2L851.5 761.7M852.1 761.2L853.3 762L853.4 762.4M852.1 761.2L853.2 761.6L854.2 761.7L855 761L856.9 760.8M855 763.9L856.5 764M857.1 766.3L857.4 765.2M865.9 756.9L865.9 758.5"/>
<path fill="#f3c2d3" stroke="#f3c2d3" stroke-width=".7" stroke-linejoin="round" d="M811.8 695.9L808.7 695L804.8 693.9L799.7 692L797 693.9L794.7 697.3L791.9 698.8L793.9 701.4L795.4 702.4L793.5 702.6L790.8 704.1L792.3 706.2L796.2 706.2L796.2 708L793.5 708.8L792.3 711.3L793.1 712.9L795.4 713.7L795.4 715.3L798.2 715.6L799.3 715.7L798.6 717.5L796.2 719.6L793.5 721.3L795.4 720.7L798.2 719.2L800.5 717.1L802.1 715.3L803.2 712.9L804.8 711.8L803.6 714.8L805.2 714L806.4 712.5L807.9 712.5L809.5 713.7L811.8 713.7L813.4 714.5L814.9 716L816.1 717.8L817.3 719.6L818.8 721L820.4 721L820.4 719.6L818.8 718.2L817.7 716L816.5 714.5L814.5 715.3L813.4 713.7L811.8 713.3ZM801.3 717.5L802.5 716.8L803 717.5L801.8 718.4ZM826 728.6L847.7 728.6L847.9 728.1L850 729.2L852 729.8L853.2 729.6L855.9 731.5L857.4 732.9L857.5 735.4L857.1 736.4L860.2 735.6L860.2 735.1L862.1 734.3L863.3 733.2L866 733.2L867.2 731.5L868 730.5L868.9 731L868.9 732.4L869.5 733.2L867.2 734.6L866.8 736.4L867.2 736.7L865.6 737.3L864.1 738L863.7 739.2L862.9 740.5L862.5 741.5L862.7 742.9L861.4 744.2L860.2 745L858.6 746.2L858.4 747.6L859 749.8L859.4 751.1L859.1 752.3L858.2 751.6L857.3 749.8L857.1 748.5L856.1 748L855.1 748.2L853.5 747.8L852.4 747.9L852.1 748.8L850.8 748.7L848.9 748.2L847.7 748.7L846.1 749.8L845.9 751.6L844.2 750.3L843 748.3L841.5 748.9L840.3 748.3L838.7 746.4L837.4 746.8L835.2 746.9L832.3 745.8L830.5 745.8L829.4 744.4L827.7 743.8L826.6 741.7L826.2 740.7L825.1 738.2L824.8 735.4L825.1 731.9L824.5 729.3L825.9 729.5ZM830.5 745.8L830.9 747.1L832.1 748.5L832.7 749.8L833.7 751.1L834.4 752.4L836 754.2L836.4 753.9L835.6 752.9L834.8 751.1L833.7 749.4L832.5 747.6L832.3 746.4L833.7 747L834 748.5L835.6 750.3L836.6 751.6L837.9 752.9L839.1 754.2L839.5 755.4L839.5 756.4L840.3 757.5L842.2 758.3L843.8 759.1L845.8 760L847.7 759.8L848.5 759.8L849.9 761.1L850.4 760L851.2 759.8L850.8 759L852.2 758.5L852.9 757.9L853.5 757.1L854.1 755.7L853.2 755.3L851.4 755.8L851.1 757.1L850.4 757.9L848.5 758.2L847.1 757.7L846.5 757.1L845.9 755.4L845.5 754.2L845.9 751.6L844.2 750.3L843 748.3L841.5 748.9L840.3 748.3L838.7 746.4L837.4 746.8L835.2 746.9L832.3 745.8ZM861.4 765.8L862.5 765.2L863.3 764L864.9 763.7L866 762.8L865.6 763.8L864.9 765.4L865.4 766.7L867.2 767.1L869.1 767.8L868.9 769.5L869.5 771.2L867.4 771.3L867.6 773L867.2 775.9L866.6 774.4L864.9 774.4L863.1 772.7L861.4 772.1L860.2 771.4L860.6 770.6L861.5 769.5L861.4 767.5L861 767ZM860.2 771.4L861.4 772.1L863.1 772.7L862.9 773.8L861 775.1L860.2 776.5L859.2 775.3L859.4 774.6L858.6 773.4L859.4 772.2ZM859.2 775.3L860.2 776.5L861 775.1L862.9 773.8L863.1 772.7L864.9 774.4L866.6 774.4L867.2 775.9L864.9 777.3L864.1 778.5L865 780L866.8 780L866.7 781.2L868 781.2L868.1 782.7L867.6 784.8L867.6 786.5L866.9 787.1L866 786.3L863.3 784.7L862.3 783.5L861.6 782L860.6 780L859.6 778.1L858.5 777.3L858.4 776.1ZM866.9 787.1L867.6 786.5L868.4 788.1L868.5 790.2L869.5 791L868.4 792.8L868.4 794.7L867.2 797.2L867.2 799.9L866.8 802.7L866.4 805.7L865.8 808.8L866 812L865.2 816.6L864.9 818.8L865.4 820L868 820.5L868.4 820.6L868.4 821.5L868.3 824.1L869.5 824.6L867.6 824.6L865.6 823.1L863.7 820.9L862.9 817.8L862.9 814.2L864.1 810.9L864.2 808.2L864.5 804.7L865.1 802.3L866 799.9L866 797.2L866.8 793.2L867 789.4ZM869.5 791L870.2 790L871.6 790.9L872.9 790.4L874.2 791.7L876.8 792.9L876.1 794.7L878.1 794.8L879.2 793.3L879.8 794.6L878.3 795.6L876.9 797.3L876.4 799.4L876.2 800.8L877.2 802.3L877.6 803.5L876.8 804.9L875 805.6L873.3 805.7L873.2 807.5L871.1 807.7L871.1 809.3L872.1 809.5L870.9 810.9L870.6 812.2L869.1 813.1L870.3 814.8L870.3 815.4L869 817.2L868 818.8L868.4 820.6L868 820.5L865.4 820L864.9 818.8L865.2 816.6L866 812L865.8 808.8L866.4 805.7L866.8 802.7L867.2 799.9L867.2 797.2L868.4 794.7L868.4 792.8ZM868.4 821.5L868.8 822.9L870.9 823.9L869.5 824.6L868.3 824.1ZM787.9 707.8L790 708.3L789.2 708.8L788 708.3ZM791.3 713.4L792.5 713.4L792.3 714L791.4 713.9ZM800.1 756.5L800.9 756.8L800.5 757.5L800.1 757.1ZM798.4 755.3L798.8 755.6L798.6 755.7ZM799.6 755.8L800.1 756L799.8 756.2Z"/>
<path fill="#c3306c" stroke="#c3306c" stroke-width=".7" stroke-linejoin="round" d="M914.5 735.4L915.6 734.6L917.5 734.8L919.1 734.9L920.4 734.9L922.3 735.7L924.3 736L924.3 736.5L923.4 737.2L922.3 737.7L921.6 739L922 739.7L921.3 740.6L920.5 741.2L920.1 741.7L918.3 741.8L917.4 742.5L916.9 741.9L916 741.3L916.2 740L916.3 739L916.4 738L916.8 737L916.7 736.5L915.4 736.4L914.9 736.5L914.9 736.3ZM923.6 738.9L924.3 738.6L924.5 739.1L924 739.2ZM907.8 749.1L908 749.4L908.6 749.5L909.2 749.3L909.8 749.7L910.6 749.7L911.3 748.8L911.3 749L910.7 749.9L909.6 750.1L908.8 749.8L907.8 749.4Z"/>
<path fill="#f6cbda" stroke="#f6cbda" stroke-width=".7" stroke-linejoin="round" d="M920.4 734.9L920.9 733.6L920.9 732.1L920.1 730.7L918.1 729.5L919.5 728.9L920.6 729.1L920.6 727.9L921.9 728L923 726.4L923.8 726.1L925.1 727.4L926.3 728L928.2 728.6L927.7 730.3L926.5 731.8L927.3 732.3L927 733.2L927.7 734.5L926.9 735.3L925.7 735.1L924.9 734.8L924.3 736L922.3 735.7ZM928.5 735.5L929.2 735.4L929.1 737.1L928.5 736.5Z"/>
<path fill="#f2bccf" stroke="#f2bccf" stroke-width=".7" stroke-linejoin="round" d="M927.7 734.5L928.7 733.9L929.8 734.4L930.4 735.9L931.4 736.7L932.6 737.3L934 738.5L934.1 739.5L934 740.5L934.7 739.7L935.1 739.5L934.7 738.8L935 738.1L936.2 738.6L936.1 737.9L934.3 736.5L933.5 736.5L932.4 734.8L931.4 734L931.5 732.8L932.5 732.4L932.4 731.5L931.2 731L930 731.2L928.4 731.6L927.3 732.3L927 733.2ZM931.5 740.5L934 740.3L933.6 741.8L931.5 740.9ZM928.2 737.5L929.4 737.5L929.3 739.3L928.4 739.5Z"/>
<path fill="none" stroke="#d6d6d6" stroke-width="1.100" stroke-linecap="round" d="M1036.1 733.2h.800M1037.2 732.3h.800M1038.4 731.5h.800M1039.6 730.7h.800M1040.6 729.8h.800M1041.5 728.6h.800M1042.7 727.1h.800M1021.2 751.1h.800M1020.5 751.6h.800M1019.1 752.6h.800M1018.1 753h.800M1022.4 749.6h.800M1023.2 747.8h.800M1043.5 778.1h.800M1044.6 778.9h.800M1045.8 779.3h.800M1046.6 780.1h.800M1047.8 780.8h.800M1051.7 784.8h.800M1052.7 786.5h.800M1053.5 788.1h.800M873.8 762.4h.800M873.6 760.4h.800M873.4 759.8h.800M874.6 762.2h.800M873.4 764.4h.800M978.3 769.5h.800M978.3 772.6h.800M964.7 789.4h.800M966.2 788.8h.800M901.5 740.7h.800M899.6 740h.800M908.2 745.6h.800M902.7 760h.800M903.1 760.8h.800M860.6 752.9h.800M861 751.1h.800M862.1 753.7h.800M783.3 782.8h.800"/>
<path fill="none" stroke="#f3c2d3" stroke-width="1" d="M791.3 722.6h1.300M789.8 723.4h1.300M788.2 724h1.300M786.6 724.6h1.300M785.2 724.8h1.300M783.5 725.2h1.300M782.4 725.3h1.300M1056.1 723.8h1.300"/></svg>
<div class="abs" style="left:782px;top:834px;font-size:9.500px;line-height:12px;color:#222">138</div>
<div class="abs" style="left:803px;top:835px;width:39px;height:9px;background:linear-gradient(to right,#f7d2df,#c3306c)"></div>
<div class="abs" style="left:848px;top:834px;font-size:9.500px;line-height:12px;color:#222">14,719</div>
<!--/MAP-->
</body>
</html>
